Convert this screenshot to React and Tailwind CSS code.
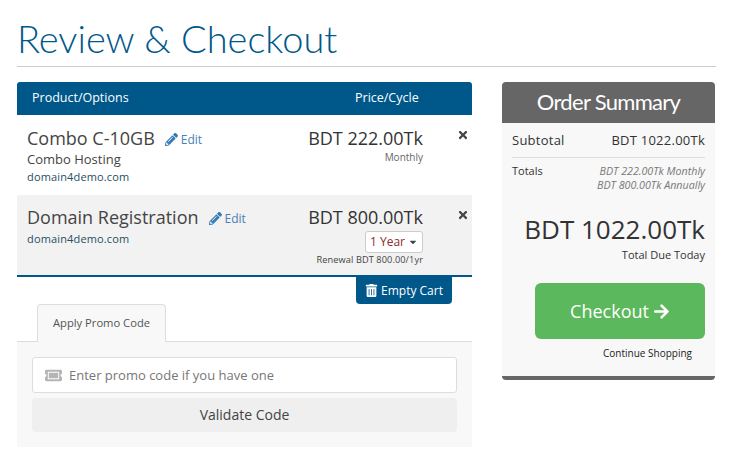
import { FaPencilAlt, FaTimes, FaCaretDown, FaTrashAlt, FaTicketAlt, FaArrowRight } from 'react-icons/fa';

const font = { sans: "font-['Open_Sans',sans-serif]" };

const EditLink = () => (
    <span className="mt-[3px] flex items-center gap-[3px] text-[12px] leading-none text-[#4a7fb5]">
        <FaPencilAlt className="text-[13px] text-[#337ab7]" />
        Edit
    </span>
);

const ProductRow = () => (
    <div className="flex h-[80px] bg-white pl-[10px] pr-[3px] pt-[10px]">
        <div className="flex-1">
            <div className="flex items-center gap-[10px]">
                <span className="text-[18px] leading-[26px] text-[#444]">Combo C-10GB</span>
                <EditLink />
            </div>
            <div className="-mt-px text-[13px] leading-[18px] text-[#444]">Combo Hosting</div>
            <div className="text-[11px] leading-[17px] tracking-[0.15px] text-[#24505f]">domain4demo.com</div>
        </div>
        <div className="w-[160px] text-right">
            <div className="text-[18px] leading-[26px] text-[#333]">BDT 222.00Tk</div>
            <div className="-mt-px text-[10px] leading-[14px] text-[#666]">Monthly</div>
        </div>
        <div className="flex w-[46px] justify-end pt-[4px]">
            <FaTimes className="text-[12px] text-[#444]" />
        </div>
    </div>
);

const DomainRow = () => (
    <div className="flex h-[82px] border-b-2 border-[#00588a] bg-[#f2f2f2] pl-[10px] pr-[3px] pt-[9px]">
        <div className="flex-1">
            <div className="flex items-center gap-[10px]">
                <span className="text-[18px] leading-[26px] text-[#444]">Domain Registration</span>
                <EditLink />
            </div>
            <div className="text-[11px] leading-[17px] tracking-[0.15px] text-[#24505f]">domain4demo.com</div>
        </div>
        <div className="flex w-[160px] flex-col items-end">
            <div className="text-[18px] leading-[26px] text-[#333]">BDT 800.00Tk</div>
            <div className="mt-[1px] flex h-[22px] w-[58px] items-center justify-center gap-[3px] rounded-[3px] border border-[#ccc] bg-white text-[12px] text-[#8b2c2c]">
                1 Year
                <FaCaretDown className="text-[10px] text-[#444]" />
            </div>
            <div className="text-[9.2px] leading-[14px] tracking-[0.1px] text-[#444]">Renewal BDT 800.00/1yr</div>
        </div>
        <div className="flex w-[46px] justify-end pt-[5px]">
            <FaTimes className="text-[12px] text-[#444]" />
        </div>
    </div>
);

const PromoPanel = () => (
    <>
        <div className="border-b border-[#ddd] pl-[20px]">
            <div className="-mb-px flex h-[38px] w-[129px] items-center justify-center rounded-t-[4px] border border-b-0 border-[#ddd] bg-[#f8f8f8] text-[11.2px] text-[#555]">
                Apply Promo Code
            </div>
        </div>
        <div className="flex h-[105px] flex-col gap-[5px] bg-[#f8f8f8] px-[15px] pt-[15px]">
            <div className="flex h-[36px] items-center rounded-[3px] border border-[#ddd] bg-white pl-[12px] text-[13px] text-[#777]">
                <FaTicketAlt className="mr-[7px] text-[17px] text-[#b5b5b5]" />
                <span className="mt-[2px]">Enter promo code if you have one</span>
            </div>
            <div className="flex h-[34px] items-center justify-center rounded-[4px] bg-[#efefef] pb-[2px] text-[14px] text-[#444]">
                Validate Code
            </div>
        </div>
    </>
);

const OrderSummary = () => (
    <div className="mt-[15px] h-[298px] w-[213px] shrink-0 overflow-hidden rounded-[4px] border-b-4 border-[#666] bg-[#f8f8f8]">
        <div className="flex h-[41px] items-center justify-center bg-[#666] pb-[3px] font-['Lato',sans-serif] text-[22px] font-normal tracking-[-0.7px] text-white">
            Order Summary
        </div>
        <div className="px-[10px]">
            <div className="flex h-[35px] items-center justify-between border-b border-[#ddd] pt-[2px] text-[13px] tracking-[0.25px] text-[#333]">
                <span>Subtotal</span>
                <span>BDT 1022.00Tk</span>
            </div>
            <div className="mt-[6px] flex justify-between">
                <span className="text-[11px] leading-[14px] text-[#333]">Totals</span>
                <div className="text-right text-[10.7px] italic leading-[14px] text-[#777]">
                    <div>BDT 222.00Tk Monthly</div>
                    <div>BDT 800.00Tk Annually</div>
                </div>
            </div>
            <div className="mt-[20px] text-right text-[26px] leading-[34px] text-[#333]">BDT 1022.00Tk</div>
            <div className="mt-[1px] text-right text-[11px] leading-[16px] text-[#333]">Total Due Today</div>
            <div className="mt-[20px] flex justify-end">
                <div className="flex h-[56px] w-[170px] items-center justify-center gap-[4px] rounded-[6px] bg-[#5cb85c] text-[18px] text-white">
                    Checkout
                    <FaArrowRight className="text-[17px]" />
                </div>
            </div>
            <div className="mt-[7px] pr-[13px] text-right text-[10px] leading-[14px] text-[#222]">Continue Shopping</div>
        </div>
    </div>
);

export default function App() {
    return (
        <div className={`h-[469px] w-[737px] overflow-hidden bg-white pl-[17px] ${font.sans}`}>
            <div className="w-[699px] border-b border-[#ccc] pb-[5px] pt-[15px]">
                <h1 className="font-['Lato',sans-serif] text-[38px] font-light leading-[46px] text-[#00588a]">Review &amp; Checkout</h1>
            </div>
            <div className="flex gap-[30px]">
                <div className="mt-[15px] w-[455px]">
                    <div className="flex h-[33px] items-center rounded-t-[3px] bg-[#00588a] pl-[15px] text-[12.5px] text-white">
                        <span className="flex-1">Product/Options</span>
                        <span className="w-[117px]">Price/Cycle</span>
                    </div>
                    <ProductRow />
                    <DomainRow />
                    <div className="flex justify-end pr-[20px]">
                        <div className="flex h-[27px] w-[96px] items-center justify-center gap-[3px] rounded-b-[4px] bg-[#00588a] text-[12px] text-white">
                            <FaTrashAlt className="text-[13px]" />
                            Empty Cart
                        </div>
                    </div>
                    <PromoPanel />
                </div>
                <OrderSummary />
            </div>
        </div>
    );
}
